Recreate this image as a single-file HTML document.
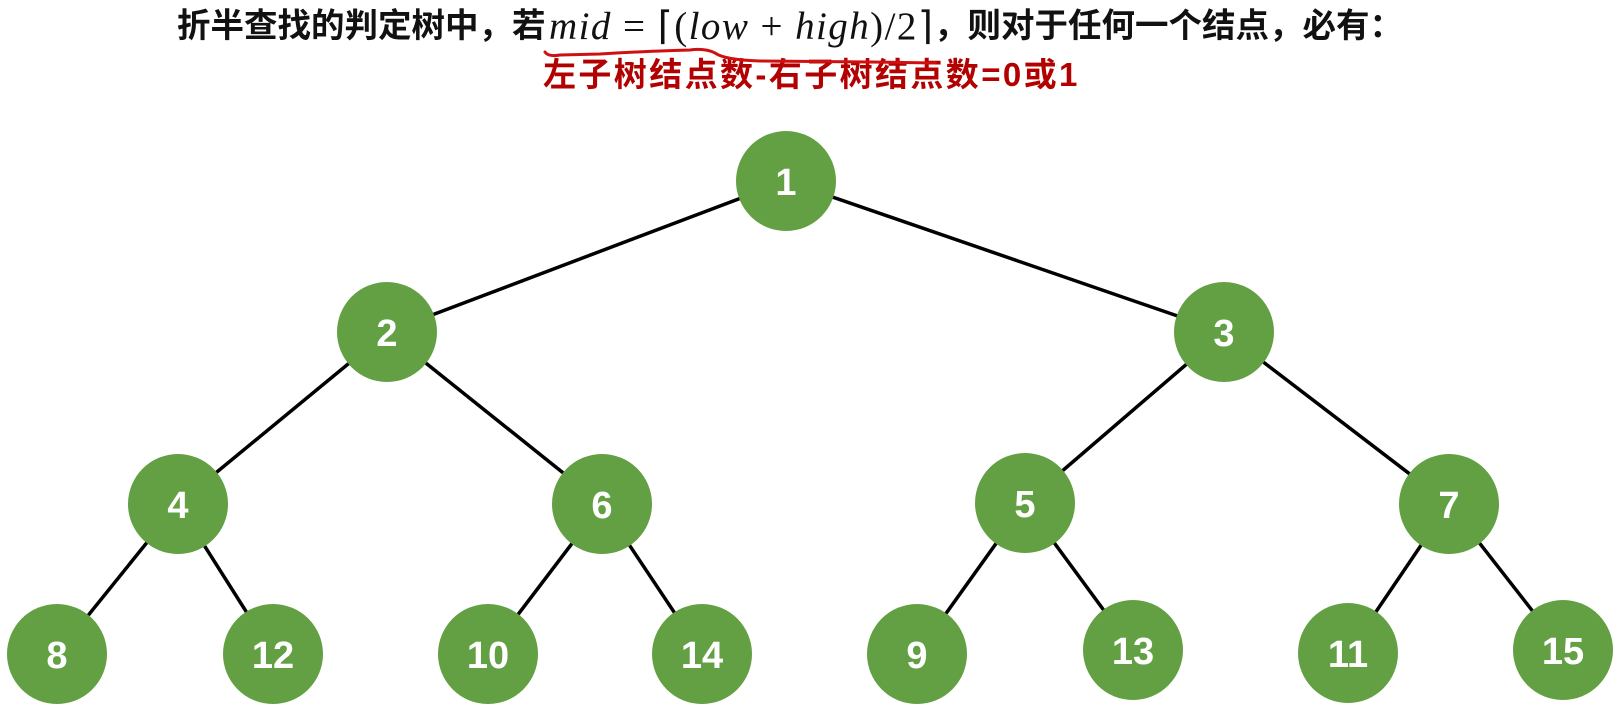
<!DOCTYPE html>
<html><head><meta charset="utf-8"><style>
html,body{margin:0;padding:0;background:#fff;}
body{width:1618px;height:724px;position:relative;overflow:hidden;}
.t{position:absolute;font-family:"Liberation Sans","Noto Sans CJK SC",sans-serif;font-weight:bold;white-space:nowrap;}
</style></head><body>
<div class="t" style="left:177px;top:7px;font-size:33.5px;color:#111;line-height:40px;">折半查找的判定树中，若</div>
<div class="t" style="left:934px;top:7px;font-size:33.5px;color:#111;line-height:40px;">，则对于任何一个结点，必有：</div>
<div class="t" style="left:543px;top:56px;font-size:33px;color:#b30000;line-height:38px;letter-spacing:2.4px;">左子树结点数-右子树结点数=0或1</div>
<svg width="1618" height="724" style="position:absolute;left:0;top:0">
<text x="549" y="39" font-family="Liberation Serif, serif" font-size="39" fill="#111" textLength="384" lengthAdjust="spacing"><tspan font-style="italic">mid</tspan> = ⌈(<tspan font-style="italic">low</tspan> + <tspan font-style="italic">high</tspan>)/2⌉</text>
<path d="M545 52 Q548 57 560 55 L600 54 Q650 51 690 50 Q705 48 715 53 Q725 60 760 61 L870 62 L935 63" fill="none" stroke="#d01010" stroke-width="3" stroke-linecap="round"/>
<g stroke="#000" stroke-width="3.5">
<line x1="786" y1="181" x2="387" y2="332"/><line x1="786" y1="181" x2="1224" y2="332"/>
<line x1="387" y1="332" x2="178" y2="504"/><line x1="387" y1="332" x2="602" y2="504"/>
<line x1="1224" y1="332" x2="1025" y2="503"/><line x1="1224" y1="332" x2="1449" y2="504"/>
<line x1="178" y1="504" x2="57" y2="654"/><line x1="178" y1="504" x2="273" y2="654"/>
<line x1="602" y1="504" x2="488" y2="654"/><line x1="602" y1="504" x2="702" y2="654"/>
<line x1="1025" y1="503" x2="917" y2="654"/><line x1="1025" y1="503" x2="1133" y2="650"/>
<line x1="1449" y1="504" x2="1348" y2="653"/><line x1="1449" y1="504" x2="1563" y2="650"/>
</g>
<g fill="#62a043">
<circle cx="786" cy="181" r="50"/><circle cx="387" cy="332" r="50"/><circle cx="1224" cy="332" r="50"/>
<circle cx="178" cy="504" r="50"/><circle cx="602" cy="504" r="50"/><circle cx="1025" cy="503" r="50"/><circle cx="1449" cy="504" r="50"/>
<circle cx="57" cy="654" r="50"/><circle cx="273" cy="654" r="50"/><circle cx="488" cy="654" r="50"/><circle cx="702" cy="654" r="50"/>
<circle cx="917" cy="654" r="50"/><circle cx="1133" cy="650" r="50"/><circle cx="1348" cy="653" r="50"/><circle cx="1563" cy="650" r="50"/>
</g>
<g fill="#fff" font-family="Liberation Sans, sans-serif" font-weight="bold" font-size="38" text-anchor="middle">
<text x="786" y="195">1</text><text x="387" y="346">2</text><text x="1224" y="346">3</text>
<text x="178" y="518">4</text><text x="602" y="518">6</text><text x="1025" y="517">5</text><text x="1449" y="518">7</text>
<text x="57" y="668">8</text><text x="273" y="668">12</text><text x="488" y="668">10</text><text x="702" y="668">14</text>
<text x="917" y="668">9</text><text x="1133" y="664">13</text><text x="1348" y="667">11</text><text x="1563" y="664">15</text>
</g>
</svg>
</body></html>
